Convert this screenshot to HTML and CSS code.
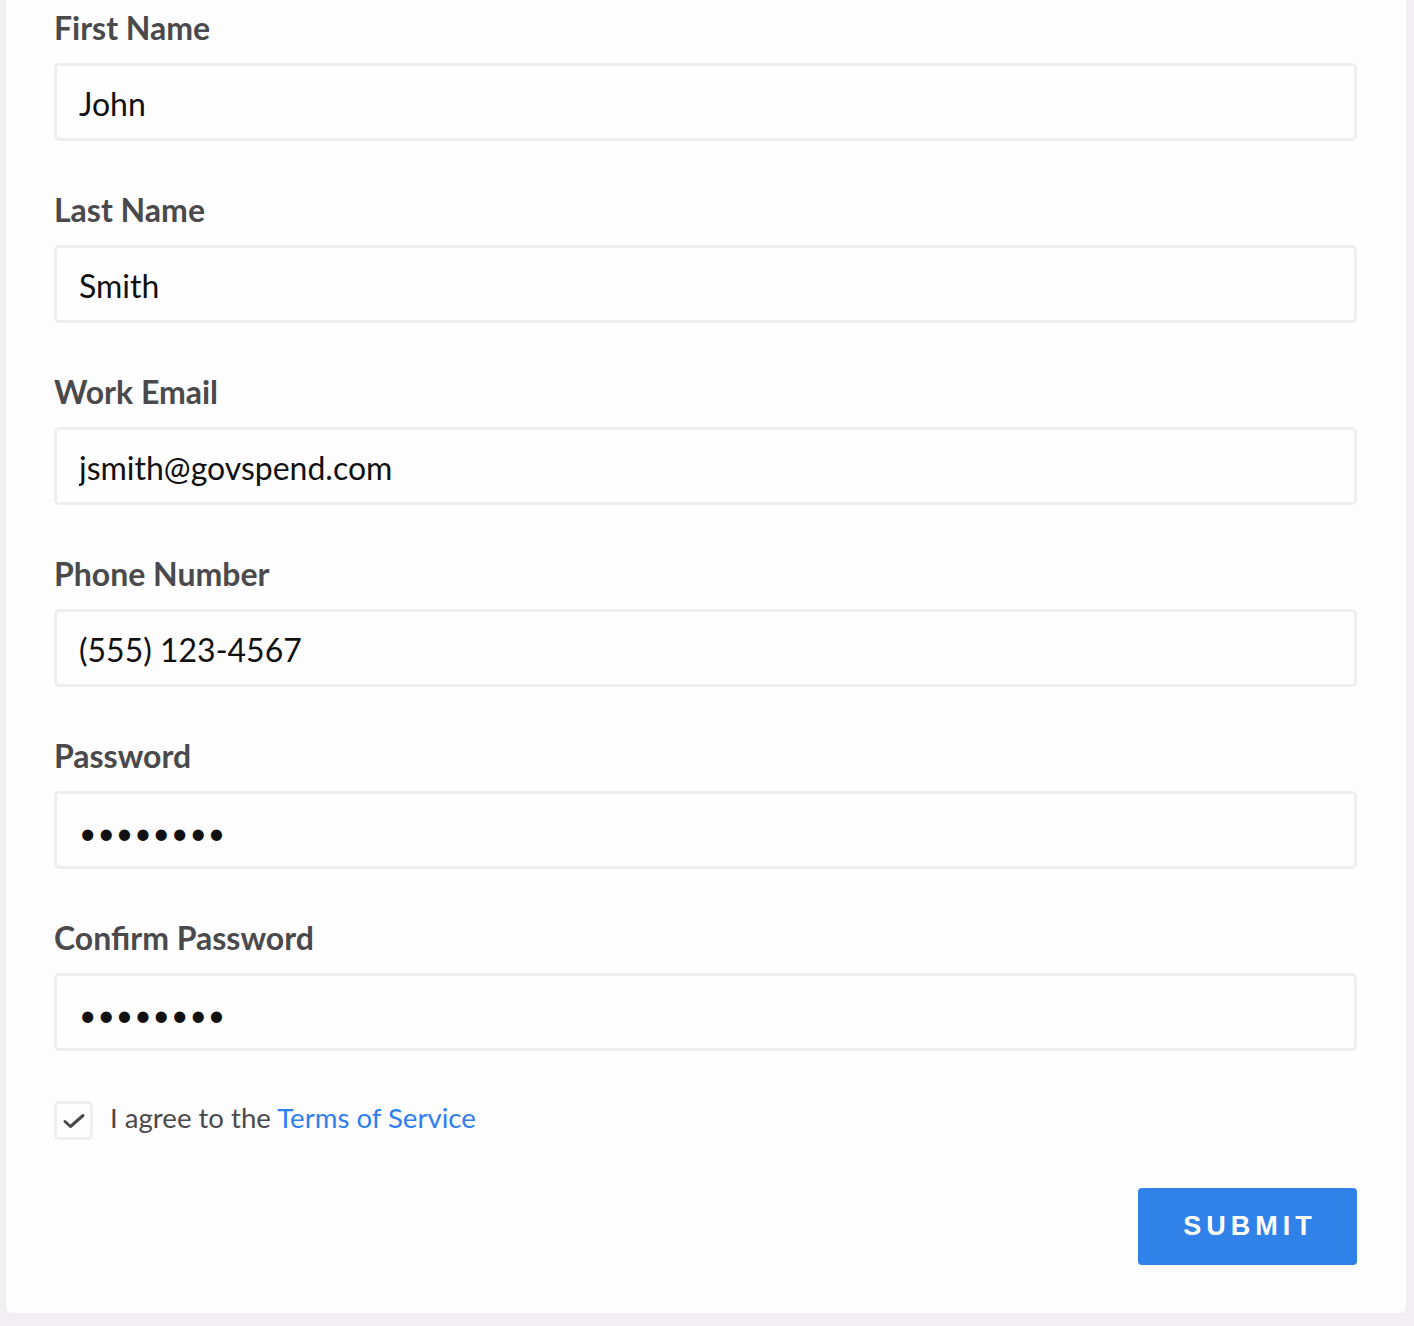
FILE: index.html
```html
<!DOCTYPE html>
<html lang="en">
<head>
<meta charset="utf-8">
<title>Sign up</title>
<link rel="stylesheet" href="styles.css">
</head>
<body>
<form class="card">
  <div class="field">
    <label class="label" for="fn">First Name</label>
    <input class="input" id="fn" type="text" value="John">
  </div>
  <div class="field">
    <label class="label" for="ln">Last Name</label>
    <input class="input" id="ln" type="text" value="Smith">
  </div>
  <div class="field">
    <label class="label" for="em">Work Email</label>
    <input class="input" id="em" type="text" value="jsmith@govspend.com">
  </div>
  <div class="field">
    <label class="label" for="ph">Phone Number</label>
    <input class="input" id="ph" type="text" value="(555) 123-4567">
  </div>
  <div class="field">
    <label class="label" for="pw">Password</label>
    <input class="input input-pw" id="pw" type="password" value="password">
  </div>
  <div class="field">
    <label class="label" for="pw2">Confirm Password</label>
    <input class="input input-pw" id="pw2" type="password" value="password">
  </div>
  <label class="agree">
    <span class="box">
      <svg class="check" width="24" height="16" viewBox="0 0 24 16"><path d="M3 8.5 L8.5 13.5 L21 2.5" fill="none" stroke="#4a4a4c" stroke-width="3" stroke-linecap="round" stroke-linejoin="round"/></svg>
    </span>
    <span class="agree-text">I agree to the <a class="link" href="#">Terms of Service</a></span>
  </label>
  <div class="actions">
    <button class="submit" type="button">SUBMIT</button>
  </div>
</form>
</body>
</html>
```
FILE: styles.css
```css
html, body {
  margin: 0;
  padding: 0;
}
body {
  background: #f1eff2;
  font-family: Lato, "Open Sans", sans-serif;
}
.card {
  margin: 0 8px 0 6px;
  width: 1400px;
  box-sizing: border-box;
  background: #fefdfe;
  border-radius: 0 0 6px 6px;
  padding: 10px 49px 48px 48px;
  display: flex;
  flex-direction: column;
}
.field {
  display: flex;
  flex-direction: column;
  margin-bottom: 51px;
}
.label {
  font-weight: 700;
  font-size: 32px;
  line-height: 36px;
  color: #4a4a4c;
  margin-bottom: 17px;
}
.input {
  box-sizing: border-box;
  height: 78px;
  width: 100%;
  border: 3px solid #efedf0;
  border-radius: 5px;
  background: #fefdfe;
  padding: 3px 22px 0;
  font-family: Lato, sans-serif;
  font-size: 32px;
  color: #111111;
  outline: none;
}
.input-pw {
  font-size: 30px;
  letter-spacing: 1px;
}
.agree {
  display: flex;
  align-items: center;
  gap: 17px;
  margin-top: -1px;
}
.box {
  box-sizing: border-box;
  width: 39px;
  height: 39px;
  border: 3px solid #efedf0;
  border-radius: 5px;
  display: flex;
  align-items: center;
  justify-content: center;
}
.agree-text {
  font-size: 27.6px;
  line-height: 34px;
  padding-bottom: 5px;
  color: #4a4a4c;
}
.link {
  color: #2f80ec;
  text-decoration: none;
}
.actions {
  display: flex;
  justify-content: flex-end;
  margin-top: 48px;
}
.submit {
  width: 219px;
  height: 77px;
  border: none;
  border-radius: 4px;
  background: #3182e8;
  color: #ffffff;
  font-family: "Liberation Sans", Arial, sans-serif;
  font-weight: 700;
  font-size: 27px;
  letter-spacing: 5px;
  padding: 0 0 0 5px;
}
```
